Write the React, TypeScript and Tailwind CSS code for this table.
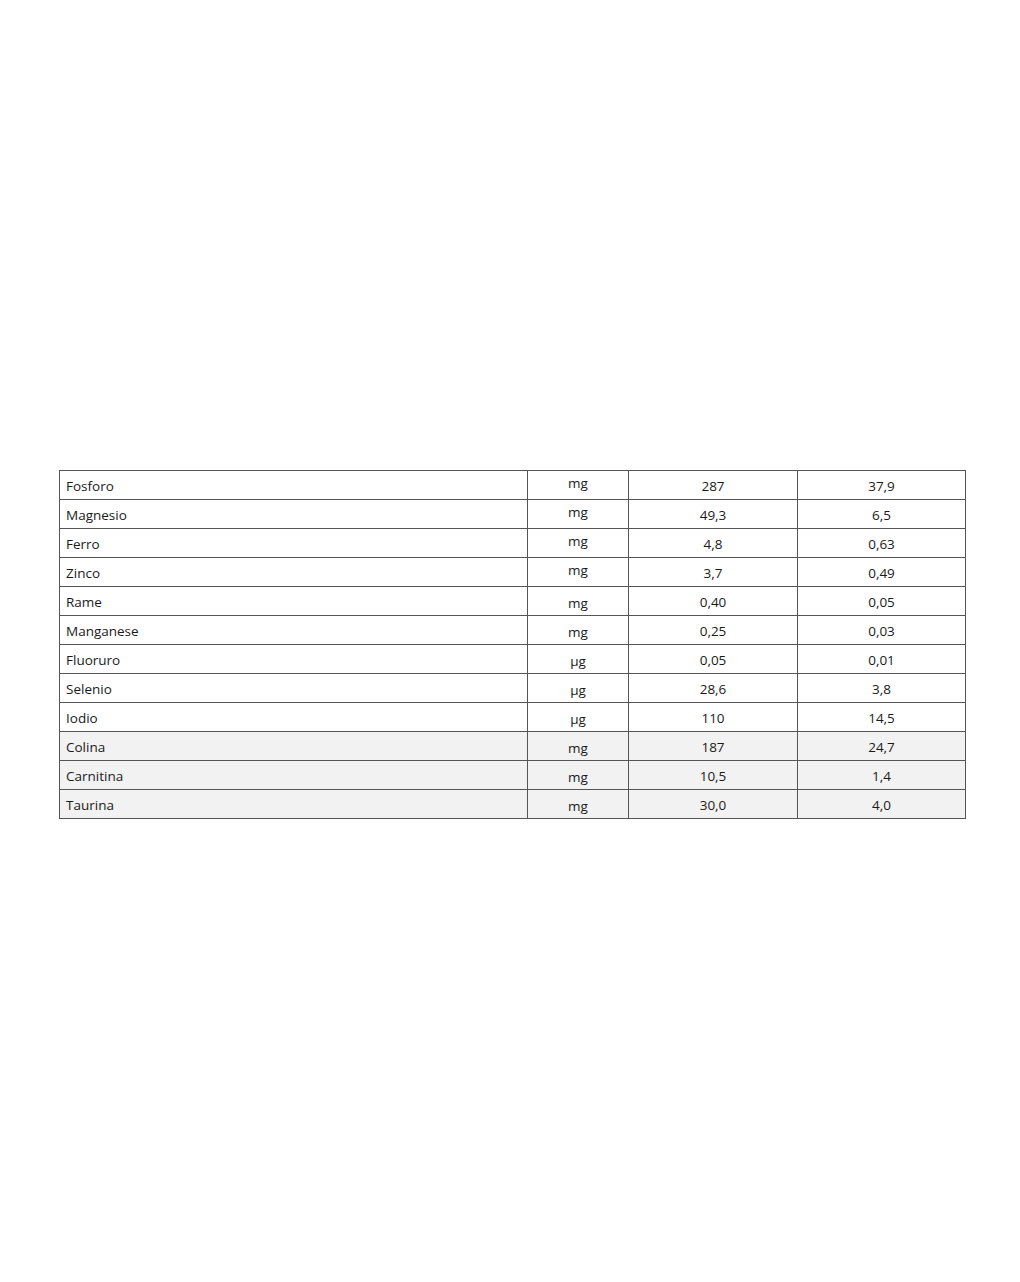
import React from "react";

type Row = { name: string; unit: string; a: string; b: string; raised?: boolean; gray?: boolean };

const rows: Row[] = [
  { name: "Fosforo", unit: "mg", a: "287", b: "37,9", raised: true },
  { name: "Magnesio", unit: "mg", a: "49,3", b: "6,5", raised: true },
  { name: "Ferro", unit: "mg", a: "4,8", b: "0,63", raised: true },
  { name: "Zinco", unit: "mg", a: "3,7", b: "0,49", raised: true },
  { name: "Rame", unit: "mg", a: "0,40", b: "0,05" },
  { name: "Manganese", unit: "mg", a: "0,25", b: "0,03" },
  { name: "Fluoruro", unit: "µg", a: "0,05", b: "0,01" },
  { name: "Selenio", unit: "µg", a: "28,6", b: "3,8" },
  { name: "Iodio", unit: "µg", a: "110", b: "14,5" },
  { name: "Colina", unit: "mg", a: "187", b: "24,7", gray: true },
  { name: "Carnitina", unit: "mg", a: "10,5", b: "1,4", gray: true },
  { name: "Taurina", unit: "mg", a: "30,0", b: "4,0", gray: true },
];

export default function App() {
  return (
    <div
      className="w-[1020px] h-[1282px] bg-white pt-[470px] pl-[59px]"
      style={{ fontFamily: '"Open Sans", "Noto Sans", sans-serif' }}
    >
      <div className="w-[907px] border border-[#555555] text-[13.5px] text-[#1a1a1a]">
        {rows.map((r, i) => (
          <div
            key={r.name}
            className={`grid grid-cols-[468px_101px_169px_167px] ${i > 0 ? "h-[29px] border-t border-[#555555]" : "h-[28px]"} ${r.gray ? "bg-[#f2f2f2]" : "bg-white"}`}
          >
            <div className="flex items-center pl-[6px] pt-[3px] border-r border-[#555555]">{r.name}</div>
            <div
              className={`flex justify-center border-r border-[#555555] ${r.raised ? "items-start pt-[2px]" : "items-center pt-[5px]"}`}
            >
              {r.unit}
            </div>
            <div className="flex items-center justify-center pt-[3px] border-r border-[#555555]">{r.a}</div>
            <div className="flex items-center justify-center pt-[3px]">{r.b}</div>
          </div>
        ))}
      </div>
    </div>
  );
}
